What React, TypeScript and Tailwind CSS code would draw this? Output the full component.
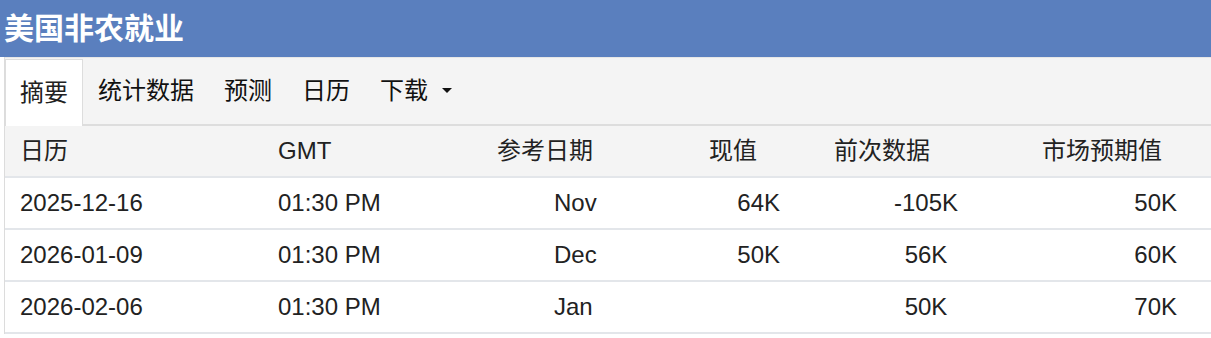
const font = { fontFamily: '"Liberation Sans", "Noto Sans CJK SC", sans-serif' };

const tabs = ["摘要", "统计数据", "预测", "日历"];

const rows = [
  { date: "2025-12-16", time: "01:30 PM", ref: "Nov", actual: "64K", prev: "-105K", fc: "50K" },
  { date: "2026-01-09", time: "01:30 PM", ref: "Dec", actual: "50K", prev: "56K", fc: "60K" },
  { date: "2026-02-06", time: "01:30 PM", ref: "Jan", actual: "", prev: "50K", fc: "70K" },
];

export default function App() {
  return (
    <div className="w-[1211px] h-[338px] overflow-hidden bg-white text-[#222]" style={font}>
      <div className="h-[57px] bg-[#5a7fbe] flex items-center pl-[4px]">
        <h1 className="text-[30px] font-bold text-white leading-none">美国非农就业</h1>
      </div>
      <div className="border-l border-[#dcdcdc] ml-[4px]">
        <div className="h-[69px] bg-[#f4f4f4] border-t border-[#e6e6e6] border-b-2 border-b-[#dddddd] flex items-end">
          {tabs.map((t, i) => (
            <div
              key={t}
              className={
                i === 0
                  ? "h-[67px] -mb-[2px] px-[14px] border border-b-0 border-[#dddddd] bg-white flex items-center text-[24px] text-[#222]"
                  : "h-[67px] px-[15px] flex items-center text-[24px] text-[#111]"
              }
            >
              {t}
            </div>
          ))}
          <div className="h-[67px] px-[15px] flex items-center text-[24px] text-[#111]">
            下载
            <span className="ml-[14px] w-0 h-0 border-l-[5px] border-r-[5px] border-t-[5px] border-l-transparent border-r-transparent border-t-[#111]" />
          </div>
        </div>

        <div className="grid grid-cols-[260px_215px_128px_164px_173px_232px] h-[52px] items-center bg-[#f4f4f4] border-b-2 border-[#e3e6ea] text-[24px]">
          <div className="pl-[15px]">日历</div>
          <div className="pl-[13px]">GMT</div>
          <div className="text-right pr-[15px]">参考日期</div>
          <div className="text-right pr-[15px]">现值</div>
          <div className="text-right pr-[15px]">前次数据</div>
          <div className="text-right pr-[15px]">市场预期值</div>
        </div>

        {rows.map((r) => (
          <div
            key={r.date}
            className="grid grid-cols-[260px_278px_154px_98px_262px_135px] h-[52px] items-center border-b-2 border-[#e3e6ea] text-[24px]"
          >
            <div className="pl-[15px]">{r.date}</div>
            <div className="pl-[13px]">{r.time}</div>
            <div className="pl-[11px]">{r.ref}</div>
            <div className="text-right pr-[15px]">{r.actual}</div>
            <div className="text-center">{r.prev}</div>
            <div className="text-right pr-[15px]">{r.fc}</div>
          </div>
        ))}
      </div>
    </div>
  );
}
